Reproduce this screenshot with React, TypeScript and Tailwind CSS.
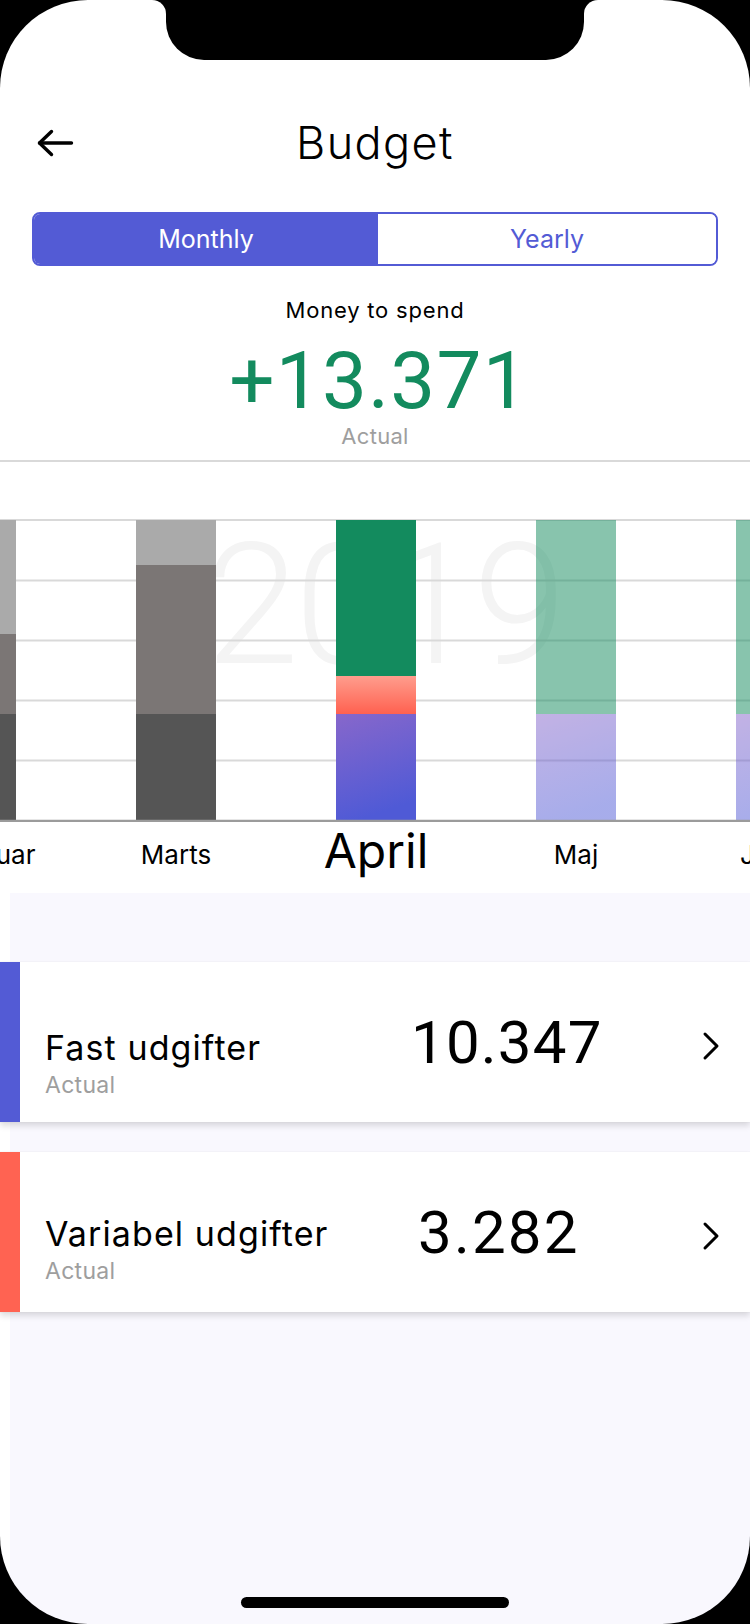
import React from "react";

function BackArrow() {
  return (
    <svg width="40" height="30" viewBox="0 0 40 30" fill="none">
      <path d="M3.5 15H35.5" stroke="#000" strokeWidth="3.4" strokeLinecap="round" />
      <path d="M15.5 3.5L3.5 15L15.5 26.5" stroke="#000" strokeWidth="3.4" strokeLinecap="round" strokeLinejoin="round" />
    </svg>
  );
}

function Chevron() {
  return (
    <svg width="18" height="34" viewBox="0 0 18 34" fill="none">
      <path d="M3 6L15 18L3 30" stroke="#000" strokeWidth="3" strokeLinecap="round" strokeLinejoin="round" />
    </svg>
  );
}

function Chart() {
  const grid = [1, 61.5, 121.5, 181.5, 241.5];
  return (
    <svg width="750" height="303" viewBox="0 0 750 303" className="block">
      <defs>
        <linearGradient id="redg" x1="0" y1="0" x2="0" y2="1">
          <stop offset="0" stopColor="#ff9d8d" />
          <stop offset="1" stopColor="#ff6150" />
        </linearGradient>
        <linearGradient id="purpg" x1="0" y1="0" x2="0.25" y2="1">
          <stop offset="0" stopColor="#8767cb" />
          <stop offset="1" stopColor="#4f5ad6" />
        </linearGradient>
      </defs>
      <text
        x="384"
        y="144"
        textAnchor="middle"
        fontFamily="Roboto, 'Liberation Sans', sans-serif"
        fontWeight={300}
        fontSize="168"
        letterSpacing="-4"
        fill="#f4f4f4"
      >
        2019
      </text>
      {grid.map((y) => (
        <line key={y} x1="0" x2="750" y1={y} y2={y} stroke="#d9d9d9" strokeWidth="2" />
      ))}
      {/* Februar */}
      <rect x="-64" y="1" width="80" height="114" fill="#aaaaaa" />
      <rect x="-64" y="115" width="80" height="80" fill="#7b7675" />
      <rect x="-64" y="195" width="80" height="107" fill="#555555" />
      {/* Marts */}
      <rect x="136" y="1" width="80" height="45" fill="#aaaaaa" />
      <rect x="136" y="46" width="80" height="149" fill="#7b7675" />
      <rect x="136" y="195" width="80" height="107" fill="#555555" />
      {/* April */}
      <rect x="336" y="1" width="80" height="156" fill="#138b5e" />
      <rect x="336" y="157" width="80" height="38" fill="url(#redg)" />
      <rect x="336" y="195" width="80" height="107" fill="url(#purpg)" />
      {/* Maj */}
      <g opacity="0.5">
        <rect x="536" y="1" width="80" height="194" fill="#138b5e" />
        <rect x="536" y="195" width="80" height="107" fill="url(#purpg)" />
      </g>
      {/* Juni */}
      <g opacity="0.5">
        <rect x="736" y="1" width="80" height="194" fill="#138b5e" />
        <rect x="736" y="195" width="80" height="107" fill="url(#purpg)" />
      </g>
      <line x1="0" x2="750" y1="302" y2="302" stroke="#9b9b9b" strokeWidth="2.5" />
    </svg>
  );
}

function MonthLabel({ label, big, shift }: { label: string; big?: boolean; shift?: string }) {
  return (
    <div className="w-[200px] shrink-0 flex justify-center">
      {big ? (
        <span className="mt-[1px] text-[48px] leading-[56px] text-black whitespace-nowrap">{label}</span>
      ) : (
        <span className={`mt-[18px] text-[26px] leading-[30px] text-black whitespace-nowrap ${shift ?? ""}`}>{label}</span>
      )}
    </div>
  );
}

function Card({
  color,
  title,
  value,
  numClass,
  titleClass,
}: {
  color: string;
  title: string;
  value: string;
  numClass: string;
  titleClass: string;
}) {
  return (
    <div className="w-[750px] h-[160px] bg-white flex shadow-[0_4px_6px_rgba(0,0,0,0.13),0_0_1px_rgba(0,0,0,0.10)]">
      <div className={`w-[20px] h-full ${color}`} />
      <div className="ml-[25px] w-[364px] flex flex-col">
        <span className={`text-[34px] leading-[40px] text-black tracking-[1.1px] whitespace-nowrap ${titleClass}`}>{title}</span>
        <span className="text-[23px] leading-[34px] text-[#9e9e9e] tracking-[0.3px]">Actual</span>
      </div>
      <span className={`mt-[46px] font-['Roboto',sans-serif] text-[60px] leading-[70px] text-black ${numClass}`}>{value}</span>
      <div className="ml-auto mr-[30px] mt-[66px]">
        <Chevron />
      </div>
    </div>
  );
}

export default function App() {
  return (
    <div className="relative w-[750px] h-[1624px] overflow-hidden bg-white font-['Inter','Liberation_Sans',sans-serif]">
      <div className="flex flex-col h-full">
        {/* Header */}
        <div className="pt-[110px] grid grid-cols-[1fr_auto_1fr] items-center h-[176px]">
          <div className="pl-[36px] flex items-center">
            <BackArrow />
          </div>
          <h1 className="text-[45px] leading-[66px] font-light text-black tracking-[1.4px]">Budget</h1>
          <div />
        </div>

        {/* Segmented control */}
        <div className="mt-[36px] mx-[32px] h-[54px] flex rounded-[8px] border-2 border-[#535bd5] overflow-hidden">
          <div className="w-[344px] bg-[#535bd5] flex items-center justify-center">
            <span className="text-[25px] leading-[50px] text-white">Monthly</span>
          </div>
          <div className="flex-1 bg-white flex items-center justify-center">
            <span className="text-[25px] leading-[50px] text-[#535bd5]">Yearly</span>
          </div>
        </div>

        {/* Summary */}
        <div className="flex flex-col items-center">
          <span className="mt-[30px] text-[22px] leading-[28px] text-black tracking-[0.8px]">Money to spend</span>
          <span className="mt-[21px] pl-[8px] font-['Roboto',sans-serif] text-[80px] leading-[72px] text-[#138b5e] tracking-[1.2px]">
            +13.371
          </span>
          <span className="mt-[5px] text-[22px] leading-[28px] text-[#9e9e9e] tracking-[0.3px]">Actual</span>
        </div>

        <div className="mt-[10px] h-[2px] bg-[#d9d9d9]" />

        {/* Chart */}
        <div className="mt-[57px]">
          <Chart />
        </div>

        {/* Month labels */}
        <div className="h-[71px] overflow-hidden">
          <div className="flex -ml-[124px]">
            <MonthLabel label="Februar" shift="ml-[24px]" />
            <MonthLabel label="Marts" />
            <MonthLabel label="April" big />
            <MonthLabel label="Maj" />
            <MonthLabel label="Juni" shift="mr-[20px]" />
          </div>
        </div>

        {/* Lower panel */}
        <div className="flex-1 ml-[10px] bg-[#f9f8fe] pt-[69px]">
          <div className="-ml-[10px] flex flex-col gap-[30px]">
            <Card
              color="bg-[#535bd5]"
              title="Fast udgifter"
              value="10.347"
              titleClass="mt-[66px]"
              numClass="ml-[2px] tracking-[1.2px]"
            />
            <Card
              color="bg-[#ff6352]"
              title="Variabel udgifter"
              value="3.282"
              titleClass="mt-[62px]"
              numClass="ml-[9px] tracking-[2.2px]"
            />
          </div>
        </div>
      </div>

      {/* Device frame overlays */}
      <div className="pointer-events-none absolute inset-0 rounded-[88px] shadow-[0_0_0_160px_#000]" />
      <div className="pointer-events-none absolute top-0 left-[152px] w-[14px] h-[14px] bg-black">
        <div className="w-full h-full bg-white rounded-tr-[14px]" />
      </div>
      <div className="pointer-events-none absolute top-0 left-[584px] w-[14px] h-[14px] bg-black">
        <div className="w-full h-full bg-white rounded-tl-[14px]" />
      </div>
      <div className="pointer-events-none absolute top-0 left-[166px] w-[418px] h-[60px] bg-black rounded-b-[38px]" />
      <div className="pointer-events-none absolute bottom-[16px] left-[241px] w-[268px] h-[11px] rounded-full bg-black" />
    </div>
  );
}
